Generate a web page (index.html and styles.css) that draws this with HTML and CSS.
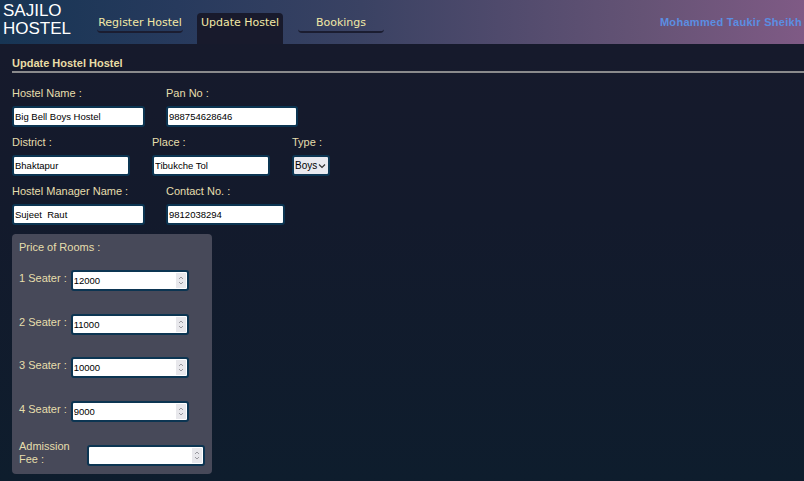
FILE: index.html
```html
<!DOCTYPE html>
<html lang="en">
<head>
<meta charset="utf-8">
<title>Sajilo Hostel - Update Hostel</title>
<link rel="stylesheet" href="styles.css">
</head>
<body>
<header class="topbar">
  <div class="brand">SAJILO<br>HOSTEL</div>
  <nav class="tabs">
    <a class="tab" href="#">Register Hostel</a>
    <a class="tab active" href="#">Update Hostel</a>
    <a class="tab" href="#">Bookings</a>
  </nav>
  <div class="user">Mohammed Taukir Sheikh</div>
</header>

<main class="content">
  <h2 class="section-title">Update Hostel Hostel</h2>

  <div class="row">
    <div class="field w154">
      <label class="lbl">Hostel Name :</label>
      <input class="txt w133" type="text" value="Big Bell Boys Hostel">
    </div>
    <div class="field">
      <label class="lbl">Pan No :</label>
      <input class="txt w132" type="text" value="988754628646">
    </div>
  </div>

  <div class="row">
    <div class="field w140">
      <label class="lbl">District :</label>
      <input class="txt w118" type="text" value="Bhaktapur">
    </div>
    <div class="field w140">
      <label class="lbl">Place :</label>
      <input class="txt w118" type="text" value="Tibukche Tol">
    </div>
    <div class="field">
      <label class="lbl">Type :</label>
      <div class="select"><span>Boys</span><svg width="8" height="6" viewBox="0 0 8 6"><path d="M1 1.5 L4 4.5 L7 1.5" fill="none" stroke="#333" stroke-width="1.2"/></svg></div>
    </div>
  </div>

  <div class="row">
    <div class="field w154">
      <label class="lbl">Hostel Manager Name :</label>
      <input class="txt w133" type="text" value="Sujeet  Raut">
    </div>
    <div class="field">
      <label class="lbl">Contact No. :</label>
      <input class="txt w119" type="text" value="9812038294">
    </div>
  </div>

  <section class="price-box">
    <div class="price-title">Price of Rooms :</div>
    <div class="price-row">
      <span class="plbl">1 Seater :</span>
      <div class="num"><input type="text" value="12000"><span class="spin"><svg width="6" height="11" viewBox="0 0 6 11"><path d="M1 4 L3 2 L5 4 M1 7 L3 9 L5 7" fill="none" stroke="#9a9aa0" stroke-width="1"/></svg></span></div>
    </div>
    <div class="price-row">
      <span class="plbl">2 Seater :</span>
      <div class="num"><input type="text" value="11000"><span class="spin"><svg width="6" height="11" viewBox="0 0 6 11"><path d="M1 4 L3 2 L5 4 M1 7 L3 9 L5 7" fill="none" stroke="#9a9aa0" stroke-width="1"/></svg></span></div>
    </div>
    <div class="price-row">
      <span class="plbl">3 Seater :</span>
      <div class="num"><input type="text" value="10000"><span class="spin"><svg width="6" height="11" viewBox="0 0 6 11"><path d="M1 4 L3 2 L5 4 M1 7 L3 9 L5 7" fill="none" stroke="#9a9aa0" stroke-width="1"/></svg></span></div>
    </div>
    <div class="price-row">
      <span class="plbl">4 Seater :</span>
      <div class="num"><input type="text" value="9000"><span class="spin"><svg width="6" height="11" viewBox="0 0 6 11"><path d="M1 4 L3 2 L5 4 M1 7 L3 9 L5 7" fill="none" stroke="#9a9aa0" stroke-width="1"/></svg></span></div>
    </div>
    <div class="price-row adm-row">
      <span class="plbl adm">Admission<br>Fee :</span>
      <div class="num"><input type="text" value=""><span class="spin"><svg width="6" height="11" viewBox="0 0 6 11"><path d="M1 4 L3 2 L5 4 M1 7 L3 9 L5 7" fill="none" stroke="#9a9aa0" stroke-width="1"/></svg></span></div>
    </div>
  </section>
</main>
</body>
</html>
```

FILE: styles.css
```css
* { box-sizing: border-box; }

html, body {
  margin: 0;
  padding: 0;
}

body {
  min-height: 100vh;
  background: linear-gradient(180deg, #171a2c 0%, #131a2c 45%, #0e1d2d 100%);
  font-family: "Liberation Sans", Arial, sans-serif;
  color: #e6deac;
}

/* ---------- header ---------- */
.topbar {
  height: 44px;
  display: flex;
  align-items: stretch;
  padding: 0 2px 0 3px;
  background: linear-gradient(90deg, #173554 0%, #273a5d 22%, #3a4263 45%, #4f4a6c 62%, #655375 80%, #7f5a85 100%);
}

.brand {
  width: 94px;
  padding-top: 2px;
  font-size: 17px;
  line-height: 18px;
  color: #ffffff;
}

.tabs {
  display: flex;
  gap: 14px;
  padding-top: 13px;
}

.tab {
  width: 86px;
  font-family: "DejaVu Sans", Verdana, sans-serif;
  font-size: 11px;
  line-height: 14px;
  color: #f2e8a6;
  text-decoration: none;
  text-align: center;
  padding: 3px 0 1px;
  height: 20px;
  border-bottom: 2px solid #1b1d31;
  border-radius: 0 0 4px 4px;
}

.tab.active {
  height: 31px;
  border-bottom: none;
  border-radius: 4px 4px 0 0;
  background: #181a2c;
}

.tab:last-child { margin-left: 1px; }

.user {
  margin-left: auto;
  padding-top: 16px;
  font-size: 11px;
  font-weight: bold;
  letter-spacing: 0.3px;
  color: #5b8ee2;
}

/* ---------- content ---------- */
.content {
  padding-left: 12px;
}

.section-title {
  margin: 13px 0 0;
  font-size: 11px;
  font-weight: bold;
  line-height: 13px;
  color: #e8dda6;
  padding-bottom: 1px;
  border-bottom: 2px solid #8a8a8c;
}

.row {
  display: flex;
  margin-top: 13px;
}

.row + .row { margin-top: 8px; }

.field {
  display: flex;
  flex-direction: column;
  align-items: flex-start;
}

.w154 { width: 154px; }
.w140 { width: 140px; }

.lbl {
  font-size: 11px;
  line-height: 14px;
  margin-bottom: 6px;
  color: #e6deac;
}

.txt {
  height: 21px;
  border: 2px solid #0c3552;
  border-radius: 3px;
  background: #ffffff;
  padding: 0 1px;
  font-family: "Liberation Sans", Arial, sans-serif;
  font-size: 9.5px;
  color: #000;
  outline: none;
}

.w133 { width: 133px; }
.w132 { width: 132px; }
.w118 { width: 118px; }
.w119 { width: 119px; }

.select {
  width: 38px;
  height: 21px;
  border: 2px solid #0c3552;
  border-radius: 3px;
  background: #e9e9ef;
  display: flex;
  align-items: center;
  justify-content: space-between;
  padding: 0 2px 0 1px;
  font-size: 10px;
  color: #000;
}

/* ---------- price box ---------- */
.price-box {
  width: 200px;
  margin-top: 9px;
  background: #474959;
  border-radius: 4px;
  padding: 7px 7px 8px 7px;
}

.price-title {
  font-size: 11px;
  line-height: 13px;
  color: #e6deac;
  margin-bottom: 16px;
}

.price-row {
  display: flex;
  align-items: center;
  margin-bottom: 22.5px;
}

.price-row:last-child { margin-bottom: 0; }

.price-row.adm-row {
  align-items: flex-start;
  margin-top: -4px;
}

.plbl {
  font-size: 11px;
  line-height: 13px;
  color: #e6deac;
  margin-right: 4px;
  margin-top: -4px;
}

.plbl.adm {
  width: 64px;
  margin-right: 4px;
  margin-top: 0;
}

.adm-row .num { margin-top: 5px; }

.num {
  width: 118px;
  height: 21px;
  border: 2px solid #0c3552;
  border-radius: 3px;
  background: #ffffff;
  display: flex;
  align-items: center;
  padding-right: 1px;
}

.num input {
  flex: 1;
  min-width: 0;
  border: none;
  outline: none;
  background: transparent;
  padding: 0 1px;
  font-family: "Liberation Sans", Arial, sans-serif;
  font-size: 9.5px;
  color: #000;
}

.spin {
  width: 10px;
  height: 15px;
  background: #e8e8ec;
  display: flex;
  align-items: center;
  justify-content: center;
}
```
